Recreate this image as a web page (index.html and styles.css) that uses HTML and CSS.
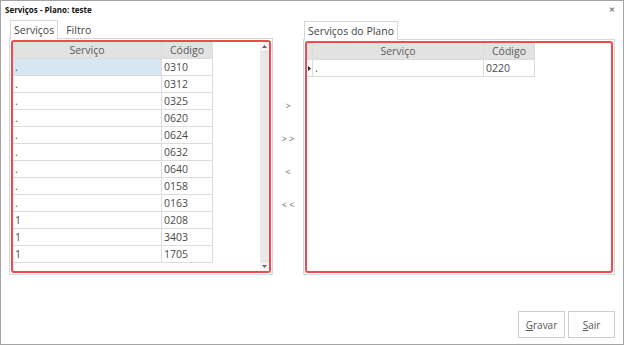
FILE: index.html
```html
<!DOCTYPE html>
<html lang="pt">
<head>
    <meta charset="UTF-8">
    <title>Serviços - Plano: teste</title>
    <link rel="stylesheet" href="styles.css">
</head>
<body>
    <div class="window">
        <div class="titlebar">
            <span class="title">Serviços - Plano: teste</span>
            <span class="close">&#x2715;</span>
        </div>

        <div class="main">
            <div class="tabs left-tabs">
                <div class="tab-strip">
                    <div class="tab active">Serviços</div>
                    <div class="tab">Filtro</div>
                </div>
                <div class="tab-page">
                    <div class="grid-box">
                        <div class="grid">
                            <div class="row head">
                                <div class="cell col-serv">Serviço</div>
                                <div class="cell col-cod">Código</div>
                            </div>
                            <div class="row">
                                <div class="cell col-serv selected">.</div>
                                <div class="cell col-cod">0310</div>
                            </div>
                            <div class="row"><div class="cell col-serv">.</div><div class="cell col-cod">0312</div></div>
                            <div class="row"><div class="cell col-serv">.</div><div class="cell col-cod">0325</div></div>
                            <div class="row"><div class="cell col-serv">.</div><div class="cell col-cod">0620</div></div>
                            <div class="row"><div class="cell col-serv">.</div><div class="cell col-cod">0624</div></div>
                            <div class="row"><div class="cell col-serv">.</div><div class="cell col-cod">0632</div></div>
                            <div class="row"><div class="cell col-serv">.</div><div class="cell col-cod">0640</div></div>
                            <div class="row"><div class="cell col-serv">.</div><div class="cell col-cod">0158</div></div>
                            <div class="row"><div class="cell col-serv">.</div><div class="cell col-cod">0163</div></div>
                            <div class="row"><div class="cell col-serv">1</div><div class="cell col-cod">0208</div></div>
                            <div class="row"><div class="cell col-serv">1</div><div class="cell col-cod">3403</div></div>
                            <div class="row"><div class="cell col-serv">1</div><div class="cell col-cod">1705</div></div>
                        </div>
                        <div class="scrollbar">
                            <div class="sb-btn">
                                <svg width="5" height="3" viewBox="0 0 5 3"><path d="M0 3 L2.5 0 L5 3 Z" fill="#666"/></svg>
                            </div>
                            <div class="sb-track"></div>
                            <div class="sb-btn">
                                <svg width="5" height="3" viewBox="0 0 5 3"><path d="M0 0 L5 0 L2.5 3 Z" fill="#666"/></svg>
                            </div>
                        </div>
                    </div>
                </div>
            </div>

            <div class="arrows">
                <span>&gt;</span>
                <span>&gt; &gt;</span>
                <span>&lt;</span>
                <span>&lt; &lt;</span>
            </div>

            <div class="tabs right-tabs">
                <div class="tab-strip">
                    <div class="tab active">Serviços do Plano</div>
                </div>
                <div class="tab-page">
                    <div class="grid-box">
                        <div class="grid">
                            <div class="row head">
                                <div class="cell col-ind"></div>
                                <div class="cell col-serv2">Serviço</div>
                                <div class="cell col-cod">Código</div>
                            </div>
                            <div class="row">
                                <div class="cell col-ind">
                                    <svg width="3" height="5" viewBox="0 0 3 5"><path d="M0 0 L3 2.5 L0 5 Z" fill="#222"/></svg>
                                </div>
                                <div class="cell col-serv2">.</div>
                                <div class="cell col-cod">0220</div>
                            </div>
                        </div>
                    </div>
                </div>
            </div>
        </div>

        <div class="footer">
            <button class="btn"><u>G</u>ravar</button>
            <button class="btn"><u>S</u>air</button>
        </div>
    </div>
</body>
</html>
```

FILE: styles.css
```css
* {
    box-sizing: border-box;
}
body {
    margin: 0;
    background: #ffffff;
    font-family: 'Open Sans', 'Noto Sans', sans-serif;
}
.window {
    width: 624px;
    height: 345px;
    border: 1px solid #a3a3a3;
    background: #ffffff;
    display: flex;
    flex-direction: column;
}
.titlebar {
    height: 19px;
    display: flex;
    align-items: center;
    justify-content: space-between;
    padding: 0 8px 2px 4px;
}
.title {
    font-size: 8px;
    font-weight: bold;
    color: #111;
}
.close {
    font-size: 7px;
    font-weight: bold;
    color: #777;
}
.main {
    display: flex;
    padding-left: 8px;
}
.tab-strip {
    display: flex;
    height: 18px;
}
.tab {
    font-size: 10.5px;
    color: #444;
    line-height: 17px;
    height: 18px;
    padding: 2px 3px 0;
    margin-right: 2px;
}
.tab.active {
    border: 1px solid #d8d8d8;
    border-bottom: none;
    background: #ffffff;
    margin-left: 1px;
    padding-top: 1px;
    margin-bottom: -1px;
    margin-right: 5px;
    height: 19px;
}
.tab-page {
    border: 1px solid #d8d8d8;
    padding: 1px;
}
.left-tabs {
    width: 264px;
}
.left-tabs .tab-page {
    height: 237px;
}
.right-tabs {
    width: 312px;
    padding-top: 1px;
}
.right-tabs .tab-page {
    height: 236px;
}
.grid-box {
    height: 100%;
    border: 2px solid #f0494e;
    border-radius: 3px;
    display: flex;
    justify-content: space-between;
}
.grid {
    font-size: 10.5px;
    color: #4a4a4a;
}
.row {
    display: flex;
    height: 17px;
}
.cell {
    border-right: 1px solid #dcdcdc;
    border-bottom: 1px solid #dcdcdc;
    padding-left: 2px;
    line-height: 16px;
    white-space: nowrap;
}
.row.head .cell {
    background: #e2e2e2;
    color: #5a5a5a;
    text-align: center;
    padding-left: 0;
}
.col-serv {
    width: 149px;
}
.col-serv2 {
    width: 171px;
}
.col-cod {
    width: 51px;
}
.col-ind {
    width: 6px;
    padding: 0;
    display: flex;
    align-items: center;
    justify-content: center;
}
.row.head .col-ind {
    background: #e2e2e2;
}
.selected {
    background: #d6e6f3;
}
.scrollbar {
    width: 9px;
    display: flex;
    flex-direction: column;
    background: #e8e8e8;
}
.sb-btn {
    height: 10px;
    background: #f4f4f4;
    display: flex;
    align-items: center;
    justify-content: center;
    border-bottom: 1px solid #dedede;
}
.sb-btn:last-child {
    border-bottom: none;
    border-top: 1px solid #dedede;
}
.sb-track {
    flex: 1;
}
.arrows {
    width: 30px;
    display: flex;
    flex-direction: column;
    align-items: center;
    padding-top: 79px;
    gap: 19px;
    font-size: 9px;
    color: #666;
    line-height: 14px;
}
.footer {
    display: flex;
    justify-content: flex-end;
    gap: 3px;
    padding: 36px 8px 0 0;
}
.btn {
    width: 47px;
    height: 27px;
    background: #ffffff;
    border: 1px solid #cfcfcf;
    font-family: 'Open Sans', 'Noto Sans', sans-serif;
    font-size: 10px;
    color: #555;
    padding: 0;
}
```
